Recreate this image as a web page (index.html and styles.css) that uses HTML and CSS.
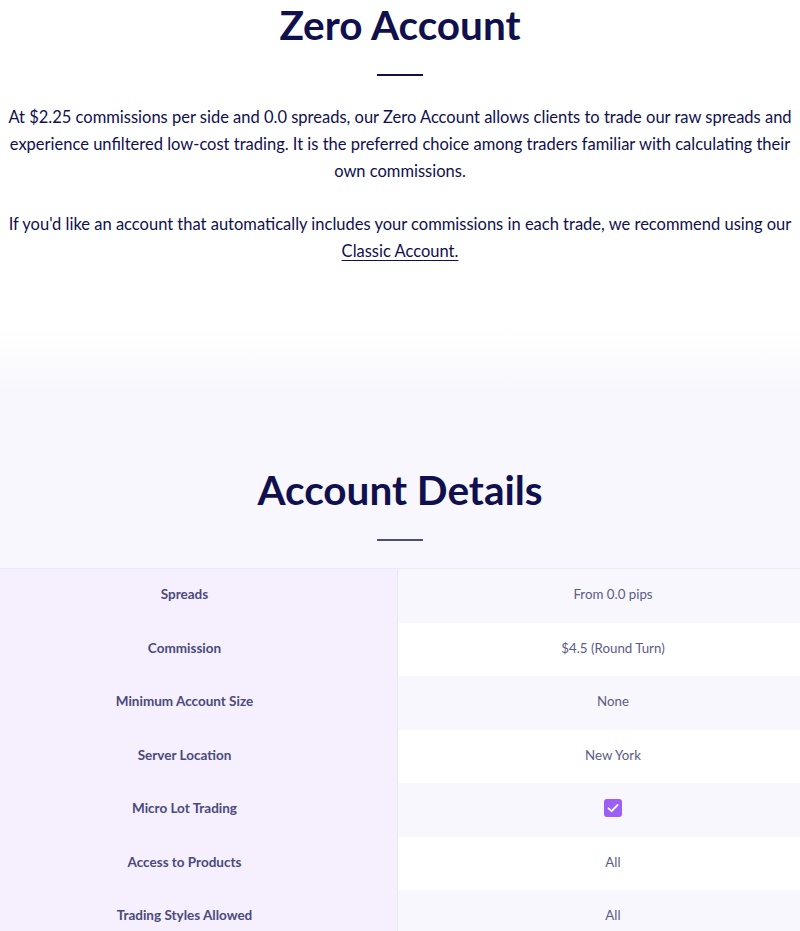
FILE: index.html
```html
<!DOCTYPE html>
<html lang="en">
<head>
<meta charset="utf-8">
<title>Zero Account</title>
<link rel="stylesheet" href="styles.css">
</head>
<body>
<section class="intro">
  <h1 class="title">Zero Account</h1>
  <div class="divider"></div>
  <p class="lead">At $2.25 commissions per side and 0.0 spreads, our Zero Account allows clients to trade our raw spreads and experience unfiltered low-cost trading. It is the preferred choice among traders familiar with calculating their own commissions.</p>
  <p class="lead">If you'd like an account that automatically includes your commissions in each trade, we recommend using our <a class="link" href="#">Classic Account.</a></p>
</section>
<section class="details">
  <h2 class="title">Account Details</h2>
  <div class="divider divider-soft"></div>
  <div class="table">
    <div class="row"><div class="label">Spreads</div><div class="value">From 0.0 pips</div></div>
    <div class="row"><div class="label">Commission</div><div class="value">$4.5 (Round Turn)</div></div>
    <div class="row"><div class="label">Minimum Account Size</div><div class="value">None</div></div>
    <div class="row"><div class="label">Server Location</div><div class="value">New York</div></div>
    <div class="row"><div class="label">Micro Lot Trading</div><div class="value"><span class="check"><svg width="18" height="18" viewBox="0 0 18 18"><path d="M4.5 9.3 L7.6 12.2 L13.6 6" fill="none" stroke="#fff" stroke-width="1.8" stroke-linecap="round" stroke-linejoin="round"/></svg></span></div></div>
    <div class="row"><div class="label">Access to Products</div><div class="value">All</div></div>
    <div class="row"><div class="label">Trading Styles Allowed</div><div class="value">All</div></div>
  </div>
</section>
</body>
</html>
```
FILE: styles.css
```css
html, body {
  margin: 0;
  padding: 0;
}
body {
  font-family: Lato, "Noto Sans", sans-serif;
  color: #10104e;
  background: #fff;
}
.intro {
  text-align: center;
  padding: 0 4px 60px;
}
.title {
  margin: 0;
  font-size: 40.5px;
  line-height: 50px;
  font-weight: 700;
  color: #10104e;
}
.divider {
  width: 46px;
  height: 2px;
  background: #10104e;
  margin: 24px auto 28px;
}
.lead {
  margin: 0 0 26px;
  font-size: 16.5px;
  line-height: 27px;
}
.lead:last-child {
  margin-bottom: 0;
}
.link {
  color: #10104e;
  text-decoration: underline;
  text-underline-offset: 3px;
  text-decoration-thickness: 1px;
}
.details {
  background: linear-gradient(to bottom, #ffffff 0px, #fdfdfd 20px, #f8f7fd 65px);
  text-align: center;
  padding-top: 140px;
}
.divider-soft {
  background: #4c4c7e;
  margin: 24px auto 27px;
}
.table {
  border-top: 1px solid #ede8fa;
}
.row {
  display: grid;
  grid-template-columns: 398px 1fr;
  height: 53.5px;
}
.label {
  background: #f5effe;
  border-right: 1px solid #ebe5f8;
  display: flex;
  align-items: center;
  justify-content: center;
  padding-right: 28px;
  padding-bottom: 3px;
  font-size: 13.5px;
  font-weight: 700;
  color: #4a4a7c;
}
.value {
  display: flex;
  align-items: center;
  justify-content: center;
  padding-left: 28px;
  padding-bottom: 3px;
  font-size: 13.3px;
  color: #5b5b86;
  background: #f8f7fd;
}
.row:nth-child(even) .value {
  background: #ffffff;
}
.check {
  display: inline-flex;
  width: 18px;
  height: 18px;
  border-radius: 3px;
  background: #9d5df6;
}
```
